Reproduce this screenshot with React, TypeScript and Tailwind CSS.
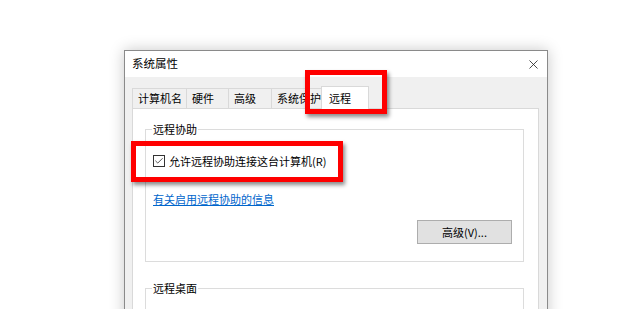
import { X, Check } from 'lucide-react'

const font = { fontFamily: '"Noto Sans CJK SC", "Noto Sans", sans-serif' }

function Tab({ label, width, active = false, last = false }: { label: string; width: string; active?: boolean; last?: boolean }) {
  return active ? (
    <div className={`relative z-10 -mb-px -ml-[2px] flex h-[23px] items-center border border-b-0 border-[#d9d9d9] bg-white pl-[7px] text-black ${width}`}>
      {label}
    </div>
  ) : (
    <div
      className={`mt-[2px] flex h-[20px] items-center border border-b-0 border-[#d9d9d9] bg-[#f0f0f0] pl-[5px] text-black ${width} ${
        last ? '' : 'border-r-0'
      }`}
    >
      {label}
    </div>
  )
}

function GroupBox({ title, className = '', children }: { title: string; className?: string; children?: React.ReactNode }) {
  return (
    <div className={`relative border border-[#dcdcdc] ${className}`}>
      <span className="absolute -top-[10px] left-[6px] bg-white px-[1px] leading-[18px] text-black">{title}</span>
      {children}
    </div>
  )
}

export default function App() {
  return (
    <div className="relative h-[309px] w-[620px] overflow-hidden bg-white text-[11px]" style={font}>
      <div className="pl-[124px] pt-[50px]">
        <div className="h-[300px] w-[424px] border border-[#8a8a8a] bg-[#f0f0f0] shadow-[0_0_14px_rgba(0,0,0,0.22)]">
          {/* Title bar */}
          <div className="flex h-[26px] items-center justify-between bg-white pl-[7px] pr-[6px]">
            <span className="text-[11.5px] text-black">系统属性</span>
            <X className="h-[15px] w-[15px] text-[#222]" strokeWidth={1.3} />
          </div>

          {/* Tabs */}
          <div className="pl-[7px] pr-[8px] pt-[9px]">
            <div className="flex items-end">
              <Tab label="计算机名" width="w-[54px]" />
              <Tab label="硬件" width="w-[42px]" />
              <Tab label="高级" width="w-[43px]" />
              <Tab label="系统保护" width="w-[52px]" last />
              <Tab label="远程" width="w-[48px]" active />
            </div>

            {/* Panel */}
            <div className="h-[240px] border border-[#d9d9d9] bg-white px-[12px] pt-[20px] pr-[14px]">
              <GroupBox title="远程协助" className="h-[133px]">
                <div className="pl-[7px] pt-[23px]">
                  <label className="flex items-center gap-[4px]">
                    <span className="flex h-[12px] w-[12px] items-center justify-center border border-[#333] bg-white">
                      <Check className="h-[10px] w-[10px] text-[#333]" strokeWidth={2} />
                    </span>
                    <span className="text-black">允许远程协助连接这台计算机(R)</span>
                  </label>
                  <div className="mt-[21px] text-[#0066cc] underline">有关启用远程协助的信息</div>
                  <div className="mt-[13px] flex justify-end pr-[11px]">
                    <button className="h-[24px] w-[95px] border border-[#adadad] bg-[#e1e1e1] text-black">高级(V)...</button>
                  </div>
                </div>
              </GroupBox>
              <GroupBox title="远程桌面" className="mt-[26px] h-[60px]" />
            </div>
          </div>
        </div>
      </div>

      {/* Red highlight boxes */}
      <div className="absolute left-[305px] top-[70px] h-[44px] w-[82px] border-[5px] border-[#ff0000] shadow-[2px_3px_4px_rgba(0,0,0,0.45)]" />
      <div className="absolute left-[131px] top-[141px] h-[41px] w-[212px] border-[5px] border-[#ff0000] shadow-[2px_3px_4px_rgba(0,0,0,0.45)]" />
    </div>
  )
}
